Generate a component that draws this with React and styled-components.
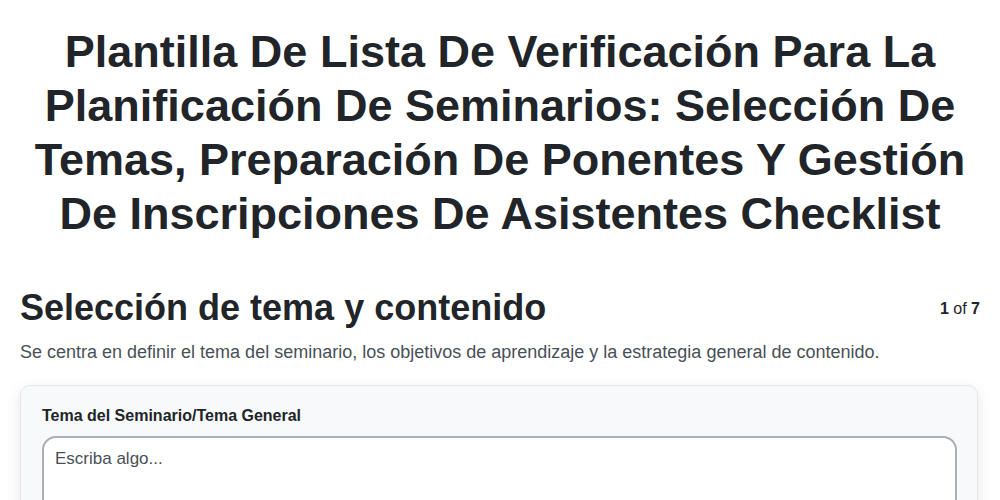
import React from 'react'
import styled, { createGlobalStyle } from 'styled-components'

const GlobalStyle = createGlobalStyle`
  body {
    margin: 0;
    background: #fff;
    font-family: "Liberation Sans", Arial, sans-serif;
    color: #212529;
  }
`

const Page = styled.div`
  padding: 0 20px;
`

const Title = styled.h1`
  margin: 0;
  padding: 25px 10px 0;
  font-size: 45px;
  line-height: 54px;
  font-weight: 700;
  text-align: center;
  color: #212529;
`

const SectionHeader = styled.div`
  display: flex;
  justify-content: space-between;
  align-items: flex-start;
  margin-top: 46px;
`

const SectionTitle = styled.h2`
  margin: 0;
  font-size: 36px;
  line-height: 42px;
  font-weight: 700;
`

const Counter = styled.div`
  font-size: 16px;
  padding-top: 13px;
  color: #212529;
  b {
    font-weight: 700;
  }
`

const Description = styled.p`
  margin: 11px 0 0;
  font-size: 18px;
  line-height: 24px;
  color: #495057;
`

const Card = styled.div`
  margin: 21px 2px 0 0;
  background: #f8f9fa;
  border: 1px solid #e5e7eb;
  border-radius: 10px;
  box-shadow: 0 4px 14px rgba(0, 0, 0, 0.1);
  padding: 21px 20px 20px 21px;
`

const Label = styled.label`
  display: block;
  font-size: 16px;
  font-weight: 700;
  color: #212529;
  margin-bottom: 11px;
`

const TextArea = styled.textarea`
  display: block;
  box-sizing: border-box;
  width: 100%;
  height: 120px;
  padding: 11px 11px;
  border: 2px solid #a9b0b8;
  border-radius: 14px;
  background: #fff;
  font-family: "Liberation Sans", Arial, sans-serif;
  font-size: 17px;
  color: #212529;
  resize: none;
  &::placeholder {
    color: #495057;
  }
`

export default function App() {
  return (
    <>
      <GlobalStyle />
      <Page>
        <Title>
          Plantilla De Lista De Verificación Para La Planificación De Seminarios: Selección De
          Temas, Preparación De Ponentes Y Gestión De Inscripciones De Asistentes Checklist
        </Title>
        <SectionHeader>
          <SectionTitle>Selección de tema y contenido</SectionTitle>
          <Counter>
            <b>1</b> of <b>7</b>
          </Counter>
        </SectionHeader>
        <Description>
          Se centra en definir el tema del seminario, los objetivos de aprendizaje y la estrategia general de contenido.
        </Description>
        <Card>
          <Label>Tema del Seminario/Tema General</Label>
          <TextArea placeholder="Escriba algo..." />
        </Card>
      </Page>
    </>
  )
}
